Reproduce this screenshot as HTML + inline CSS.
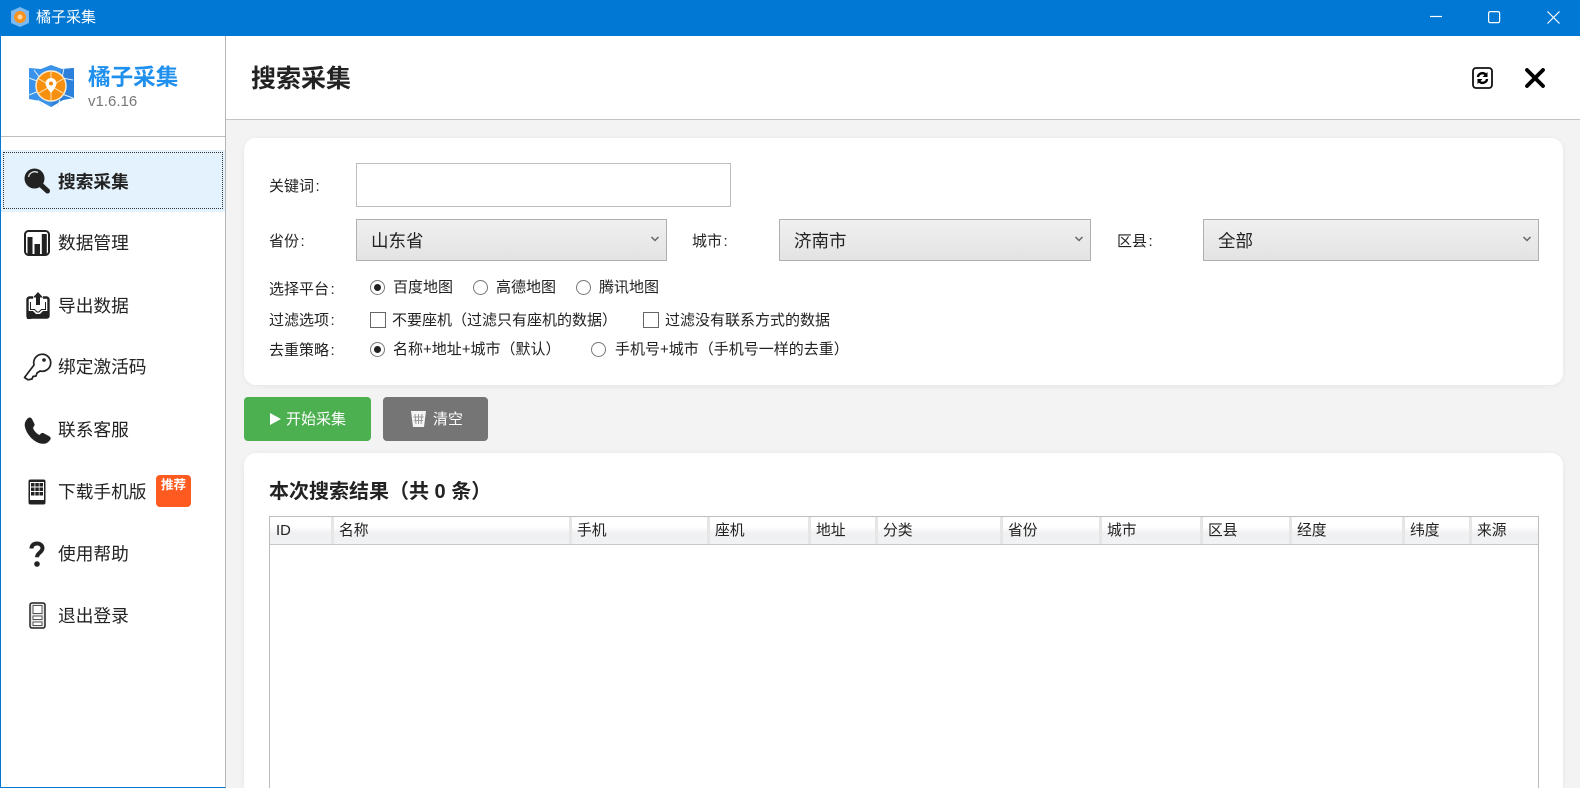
<!DOCTYPE html>
<html lang="zh">
<head>
<meta charset="utf-8">
<title>橘子采集</title>
<style>
*{box-sizing:border-box;margin:0;padding:0}
html,body{width:1580px;height:788px;overflow:hidden;background:#f3f3f3;font-family:"Liberation Sans","Noto Sans CJK SC",sans-serif;color:#222}
#w{position:absolute;left:0;top:0;width:1580px;height:788px;overflow:hidden;background:#f3f3f3}
.a{position:absolute}
.t{position:absolute;white-space:nowrap;line-height:24px;height:24px}
.l{font-size:15px;color:#222}
.m{font-size:17.7px;left:58px;color:#222}
.card{position:absolute;background:#fff;border-radius:12px;box-shadow:0 1px 6px rgba(0,0,0,.06)}
.sel{position:absolute;top:219px;height:42px;border:1px solid #b0b0b0;background:linear-gradient(#f0f0f0,#e3e3e3)}
.sel span{position:absolute;left:14px;top:9px;font-size:17.5px;line-height:24px;color:#222}
.sel svg{position:absolute;right:6px;top:15px}
.r{position:absolute;width:15px;height:15px;border:1px solid #777;border-radius:50%;background:#fff}
.r.on::after{content:"";position:absolute;left:3px;top:3px;width:7px;height:7px;border-radius:50%;background:#222}
.c{position:absolute;width:16px;height:16px;border:1px solid #666;background:#fff}
.th{position:absolute;top:0;height:27px;border-right:3px solid #e6e6e6;font-size:14.8px;line-height:29px;padding-left:5px;color:#222}
i{font-style:normal;margin-left:1.5px}
</style>
</head>
<body>
<div id="w">
<div class="a" style="left:0;top:0;width:1580px;height:36px;background:#0078d4"></div>
<svg class="a" style="left:9px;top:6px" width="22" height="22" viewBox="0 0 22 22">
<path d="M11 1l9 4v12l-9 4-9-4V5z" fill="#7ab8ee"/><circle cx="11" cy="11" r="6" fill="#f7931e"/><circle cx="11" cy="11" r="2.500" fill="#ffd9a0"/></svg>
<div class="t" style="left:36px;top:6px;font-size:15px;color:#fff">橘子采集</div>
<svg class="a" style="left:1420px;top:0" width="160" height="36" fill="none" stroke="#fff" stroke-width="1.2">
<path d="M10 16.500h12"/><rect x="68.600" y="11.600" width="11" height="11" rx="1.500"/><path d="M127.500 11.500l12 12M139.500 11.500l-12 12"/></svg>

<div class="a" style="left:0;top:36px;width:226px;height:752px;background:#fff;border-left:1px solid #0078d4;border-right:1px solid #b5b5b5;border-bottom:1px solid #0078d4"></div>
<svg class="a" style="left:26px;top:64px" width="50" height="44" viewBox="0 0 50 44">
<path d="M25 1l11 4 12-1v30l-11 2-12 7-11-6-11-2V4l12 1z" fill="#3a93ea"/>
<path d="M36 5l12-1v30l-11 2-12 7z" fill="#2b80dc"/>
<path d="M3 14l8 3 2 10-10 4M8 6l6 8M38 4l-2 10 11 2M36 30l11 4M34 36l-3 7M12 36l5 6" stroke="#e2f0fc" stroke-width="1" fill="none"/>
<circle cx="25" cy="22" r="15" fill="#f8900f" stroke="#fdeacd" stroke-width="1.500"/>
<path d="M25 22L25 8M25 22L37 15M25 22L37 29M25 22L25 36M25 22L13 29M25 22L13 15" stroke="#fdd9a3" stroke-width="1.100"/>
<path d="M25 14a5.500 5.500 0 0 1 5.500 5.500c0 3.500-5.500 9.500-5.500 9.500s-5.500-6-5.500-9.500A5.500 5.500 0 0 1 25 14z" fill="#fff"/><circle cx="25" cy="19.500" r="2" fill="#f58a12"/></svg>
<div class="t" style="left:88px;top:66px;font-size:22.600px;font-weight:700;color:#2090ee">橘子采集</div>
<div class="t" style="left:88px;top:90px;font-size:15px;color:#777">v1.6.16</div>
<div class="a" style="left:1px;top:136px;width:224px;height:1px;background:#bdbdbd"></div>

<div class="a" style="left:1px;top:150px;width:224px;height:62px;background:#e3f2fd"></div>
<div class="a" style="left:3px;top:152px;width:220px;height:57px;border:1px dotted #333"></div>

<svg class="a" style="left:24px;top:168px" width="27" height="26" viewBox="0 0 27 26">
<path d="M17 17l6.500 6" stroke="#222" stroke-width="5" stroke-linecap="round"/><circle cx="10.500" cy="10.500" r="10" fill="#222"/><path d="M4.500 9a6.500 6.500 0 0 1 9.500-4.500" stroke="#dfe6ea" stroke-width="1.300" fill="none"/></svg>
<div class="t m" style="top:170px;font-weight:700">搜索采集</div>

<svg class="a" style="left:24px;top:230px" width="26" height="26" viewBox="0 0 26 26">
<rect x="1" y="1" width="24" height="24" rx="3.500" fill="#fff" stroke="#222" stroke-width="2"/><path d="M3.500 7h5v17h-5zM10.500 14h5.500v10h-5.500zM17.800 4h5v20h-5z" fill="#222"/></svg>
<div class="t m" style="top:231px">数据管理</div>

<svg class="a" style="left:26px;top:292px" width="24" height="27" viewBox="0 0 24 27">
<path d="M7 5.500H3.500a2 2 0 0 0-2 2V24a1.500 1.500 0 0 0 1.500 1.500h18a1.500 1.500 0 0 0 1.500-1.500V7.500a2 2 0 0 0-2-2H17" fill="#fff" stroke="#222" stroke-width="2.400"/>
<path d="M1 19h6l3 3h4l3-3h6v5a2.500 2.500 0 0 1-2.500 2.500h-15A2.500 2.500 0 0 1 1 24z" fill="#222"/><path d="M4.500 10v7.500h4l2.500 2.500h2l2.500-2.500h4V10" fill="none" stroke="#222" stroke-width="1"/>
<path d="M12 0l5 5.500h-3V13h-4V5.500H7z" fill="#222"/></svg>
<div class="t m" style="top:294px">导出数据</div>

<svg class="a" style="left:23px;top:353px" width="29" height="28" viewBox="0 0 29 28" fill="none" stroke="#222" stroke-width="1.700" stroke-linejoin="round">
<path d="M11 12a8.500 8.500 0 1 1 6 6l-3 2-1 3-3 .500-1 2.500-4 .800L1.500 24.500z"/><circle cx="21" cy="7" r="1.800" fill="#222" stroke="none"/></svg>
<div class="t m" style="top:355px">绑定激活码</div>

<svg class="a" style="left:24px;top:417px" width="27" height="27" viewBox="0 0 27 27">
<path d="M4 1c2-1 3-.500 4 1l2.500 5c.300 1-.200 2-1 3l-.500 1c1 3 4 6 6.500 7l1.500-1.500c.800-.600 1.700-.800 2.700-.300l5.500 3c1.500 1 2 2 1 3.500-2 3-5 4.500-8 4C10 26 2 17 .800 9 .300 6 2 3 4 1z" fill="#222"/></svg>
<div class="t m" style="top:418px">联系客服</div>

<svg class="a" style="left:28px;top:479px" width="18" height="26" viewBox="0 0 18 26">
<rect x="0.500" y="0.500" width="17" height="25" rx="2" fill="#222"/><rect x="2" y="3" width="14" height="18" fill="#fff"/>
<path d="M3 4h3.500v3.500H3zM7.300 4h3.500v3.500H7.300zM11.500 4H15v3.500h-3.500zM3 8.500h3.500V12H3zM7.300 8.500h3.500V12H7.300zM11.500 8.500H15V12h-3.500zM3 13h3.500v3.500H3zM7.300 13h3.500v3.500H7.300zM11.500 13H15v3.500h-3.500z" fill="#222"/></svg>
<div class="t m" style="top:480px">下载手机版</div>
<div class="a" style="left:156px;top:475px;width:35px;height:32px;background:#ff5a1f;border-radius:4px;color:#fff;font-size:12.500px;font-weight:700;text-align:center;line-height:20px">推荐</div>

<svg class="a" style="left:29px;top:541px" width="16" height="26" viewBox="0 0 16 26">
<path d="M2.500 7.500C2.500 4 5 2.500 8 2.500s5.500 1.800 5.500 4.800c0 4-5.500 4.500-5.500 9" fill="none" stroke="#222" stroke-width="4"/><circle cx="8" cy="23" r="2.800" fill="#222"/></svg>
<div class="t m" style="top:542px">使用帮助</div>

<svg class="a" style="left:29px;top:602px" width="17" height="27" viewBox="0 0 17 27">
<rect x="1" y="1" width="15" height="25" rx="2" fill="#e8e8e8" stroke="#222" stroke-width="1.500"/><rect x="4" y="3.500" width="9" height="8" fill="#fff" stroke="#555"/><rect x="4" y="14" width="9" height="3.500" fill="#fff" stroke="#555"/><rect x="4" y="20" width="9" height="3.500" fill="#fff" stroke="#555"/></svg>
<div class="t m" style="top:604px">退出登录</div>

<div class="a" style="left:226px;top:36px;width:1354px;height:84px;background:#fff;border-bottom:1px solid #c4c4c4"></div>
<div class="t" style="left:251px;top:67px;font-size:25px;font-weight:700;color:#222">搜索采集</div>
<svg class="a" style="left:1472px;top:67px" width="21" height="22" viewBox="0 0 21 22">
<rect x="1" y="1" width="19" height="20" rx="3" fill="#fff" stroke="#111" stroke-width="1.800"/>
<path d="M6 10a4.500 4 0 0 1 7.500-2.800M15 12a4.500 4 0 0 1-7.500 2.800" fill="none" stroke="#000" stroke-width="2.400"/><path d="M15.500 5v5h-5zM5.500 17v-5h5z" fill="#000"/></svg>
<svg class="a" style="left:1524px;top:67px" width="22" height="22" viewBox="0 0 22 22"><path d="M3 3l16 16M19 3L3 19" stroke="#000" stroke-width="3.800" stroke-linecap="round"/></svg>

<div class="card" style="left:244px;top:138px;width:1319px;height:247px"></div>
<div class="t l" style="left:269px;top:175px">关键词<i>:</i></div>
<div class="a" style="left:356px;top:163px;width:375px;height:44px;border:1px solid #bdbdbd;background:#fff"></div>

<div class="t l" style="left:269px;top:230px">省份<i>:</i></div>
<div class="sel" style="left:356px;width:311px"><span>山东省</span><svg width="10" height="8" viewBox="0 0 10 8"><path d="M1.500 2L5 5.500 8.500 2" fill="none" stroke="#666" stroke-width="1.500"/></svg></div>
<div class="t l" style="left:692px;top:230px">城市<i>:</i></div>
<div class="sel" style="left:779px;width:312px"><span>济南市</span><svg width="10" height="8" viewBox="0 0 10 8"><path d="M1.500 2L5 5.500 8.500 2" fill="none" stroke="#666" stroke-width="1.500"/></svg></div>
<div class="t l" style="left:1117px;top:230px">区县<i>:</i></div>
<div class="sel" style="left:1203px;width:336px"><span>全部</span><svg width="10" height="8" viewBox="0 0 10 8"><path d="M1.500 2L5 5.500 8.500 2" fill="none" stroke="#666" stroke-width="1.500"/></svg></div>

<div class="t l" style="left:269px;top:278px">选择平台<i>:</i></div>
<div class="r on" style="left:370px;top:280px"></div><div class="t l" style="left:393px;top:276px">百度地图</div>
<div class="r" style="left:473px;top:280px"></div><div class="t l" style="left:496px;top:276px">高德地图</div>
<div class="r" style="left:576px;top:280px"></div><div class="t l" style="left:599px;top:276px">腾讯地图</div>

<div class="t l" style="left:269px;top:309px">过滤选项<i>:</i></div>
<div class="c" style="left:370px;top:312px"></div><div class="t l" style="left:392px;top:309px">不要座机（过滤只有座机的数据）</div>
<div class="c" style="left:643px;top:312px"></div><div class="t l" style="left:665px;top:309px">过滤没有联系方式的数据</div>

<div class="t l" style="left:269px;top:339px">去重策略<i>:</i></div>
<div class="r on" style="left:370px;top:342px"></div><div class="t l" style="left:393px;top:338px">名称+地址+城市（默认）</div>
<div class="r" style="left:591px;top:342px"></div><div class="t l" style="left:615px;top:338px">手机号+城市（手机号一样的去重）</div>

<div class="a" style="left:244px;top:397px;width:127px;height:44px;background:#4caf50;border-radius:4px"></div>
<svg class="a" style="left:270px;top:412px" width="12" height="14"><path d="M0 1l11 6-11 6z" fill="#fff"/></svg>
<div class="t" style="left:286px;top:408px;font-size:15px;color:#fff">开始采集</div>
<div class="a" style="left:383px;top:397px;width:105px;height:44px;background:#757575;border-radius:4px"></div>
<svg class="a" style="left:410px;top:410px" width="17" height="18" viewBox="0 0 17 18">
<path d="M1 1h15l-2 16H3z" fill="#f4f4f4"/><path d="M5 4l1 10M8.500 4v10M12 4l-1 10M3.500 7h10M4 10.500h9" stroke="#999" stroke-width="1"/></svg>
<div class="t" style="left:433px;top:408px;font-size:15px;color:#fff">清空</div>

<div class="card" style="left:244px;top:453px;width:1319px;height:335px;border-radius:12px 12px 0 0"></div>
<div class="t" style="left:269px;top:480px;font-size:20px;font-weight:700;color:#222">本次搜索结果（共 0 条）</div>

<div class="a" style="left:269px;top:516px;width:1270px;height:272px;border:1px solid #bdbdbd;border-bottom:0;background:#fff">
<div class="a" style="left:0;top:0;width:1268px;height:28px;background:linear-gradient(#fff 0,#fff 35%,#eff0f2 60%,#f1f2f4 100%);border-bottom:1px solid #c8c8c8"></div>
<div class="th" style="left:0;width:64px;padding-left:6px">ID</div>
<div class="th" style="left:64px;width:238px">名称</div>
<div class="th" style="left:302px;width:138px">手机</div>
<div class="th" style="left:440px;width:101px">座机</div>
<div class="th" style="left:541px;width:67px">地址</div>
<div class="th" style="left:608px;width:125px">分类</div>
<div class="th" style="left:733px;width:99px">省份</div>
<div class="th" style="left:832px;width:101px">城市</div>
<div class="th" style="left:933px;width:89px">区县</div>
<div class="th" style="left:1022px;width:113px">经度</div>
<div class="th" style="left:1135px;width:67px">纬度</div>
<div class="th" style="left:1202px;width:66px;border-right:0">来源</div>
</div>
</div>
</body>
</html>
